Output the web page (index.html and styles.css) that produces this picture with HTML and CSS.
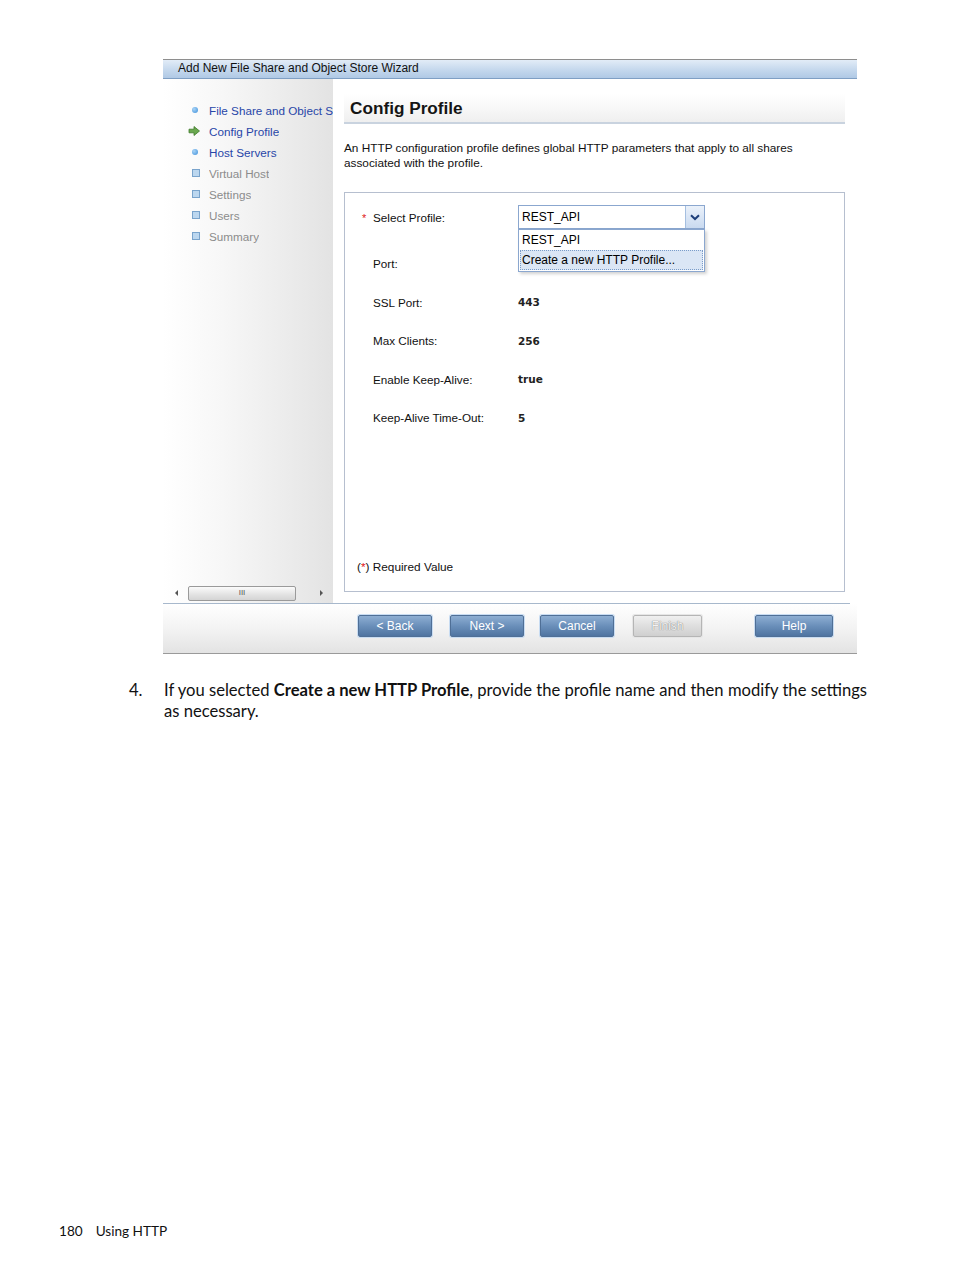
FILE: index.html
```html
<!DOCTYPE html>
<html>
<head>
<meta charset="utf-8">
<title>Config Profile</title>
<link rel="stylesheet" href="styles.css">
</head>
<body>
<div class="page">
  <div class="wizard">
    <div class="titlebar">Add New File Share and Object Store Wizard</div>
    <div class="main">
      <div class="nav">
        <ul class="steps">
          <li class="step-item active"><span class="bullet dot"></span><span class="step-text">File Share and Object Store Name</span></li>
          <li class="step-item active"><span class="bullet arrow"><svg width="12" height="10" viewBox="0 0 12 10"><path d="M1 3.2 H6 V0.5 L11.5 5 L6 9.5 V6.8 H1 Z" fill="#6aa84f" stroke="#3f7a2a" stroke-width="0.8"/></svg></span><span class="step-text">Config Profile</span></li>
          <li class="step-item active"><span class="bullet dot"></span><span class="step-text">Host Servers</span></li>
          <li class="step-item pending"><span class="bullet square"></span><span class="step-text">Virtual Host</span></li>
          <li class="step-item pending"><span class="bullet square"></span><span class="step-text">Settings</span></li>
          <li class="step-item pending"><span class="bullet square"></span><span class="step-text">Users</span></li>
          <li class="step-item pending"><span class="bullet square"></span><span class="step-text">Summary</span></li>
        </ul>
        <div class="hscroll">
          <span class="sarrow left"></span>
          <span class="thumb"><span class="grip">III</span></span>
          <span class="sarrow right"></span>
        </div>
      </div>
      <div class="content">
        <div class="heading">Config Profile</div>
        <p class="desc">An HTTP configuration profile defines global HTTP parameters that apply to all shares<br>associated with the profile.</p>
        <div class="formbox">
          <div class="rows">
            <div class="row first">
              <div class="label"><span class="star">*</span>Select Profile:</div>
              <div class="value">
                <div class="select">
                  <span class="select-text">REST_API</span>
                  <span class="select-btn"><svg width="10" height="7" viewBox="0 0 10 7"><path d="M1 1.2 L5 5 L9 1.2" fill="none" stroke="#1e3f7a" stroke-width="2"/></svg></span>
                  <div class="droplist">
                    <div class="opt">REST_API</div>
                    <div class="opt hl">Create a new HTTP Profile...</div>
                  </div>
                </div>
              </div>
            </div>
            <div class="row"><div class="label">Port:</div><div class="value strong"></div></div>
            <div class="row"><div class="label">SSL Port:</div><div class="value strong">443</div></div>
            <div class="row"><div class="label">Max Clients:</div><div class="value strong">256</div></div>
            <div class="row"><div class="label">Enable Keep-Alive:</div><div class="value strong">true</div></div>
            <div class="row"><div class="label">Keep-Alive Time-Out:</div><div class="value strong">5</div></div>
          </div>
          <div class="required">(<span class="star-inline">*</span>) Required Value</div>
        </div>
      </div>
    </div>
    <div class="separator"></div>
    <div class="buttonbar">
      <span class="btn b-back">&lt; Back</span>
      <span class="btn b-next">Next &gt;</span>
      <span class="btn b-cancel">Cancel</span>
      <span class="btn b-finish disabled">Finish</span>
      <span class="btn b-help">Help</span>
    </div>
  </div>

  <div class="instruction">
    <span class="num">4.</span>
    <p class="itext">If you selected <b>Create a new HTTP Profile</b>, provide the profile name and then modify the settings as necessary.</p>
  </div>

  <footer class="footer"><span class="pnum">180</span><span class="ptitle">Using HTTP</span></footer>
</div>
</body>
</html>
```

FILE: styles.css
```css
* { box-sizing: border-box; }
html, body { margin: 0; padding: 0; background: #fff; }
body { font-family: "Liberation Sans", Arial, sans-serif; color: #000; }

.page {
  height: 1271px;
  display: flex;
  flex-direction: column;
  padding-top: 59px;
}

.wizard {
  width: 694px;
  margin-left: 163px;
}

.titlebar {
  height: 20px;
  border-top: 1px solid #8e8e8e;
  border-bottom: 1px solid #7f9fc4;
  background: linear-gradient(#e2ecf7, #c2d6ec 60%, #b0c9e5);
  font-size: 12px;
  line-height: 17px;
  padding-left: 15px;
  color: #111;
}

.main {
  display: flex;
  height: 524px;
}

.nav {
  width: 170px;
  flex: none;
  background: linear-gradient(to right, #ffffff 0%, #f7f7f7 35%, #ebebeb 75%, #e3e3e3 100%);
  display: flex;
  flex-direction: column;
  overflow: hidden;
}

.steps {
  list-style: none;
  margin: 0;
  padding: 20.5px 0 0 25px;
  flex: 1;
}
.step-item {
  display: flex;
  align-items: center;
  height: 21px;
  font-size: 11.7px;
  white-space: nowrap;
  overflow: hidden;
}
.step-text { overflow: hidden; }
.step-item.active { color: #2846a8; }
.step-item.pending { color: #8c8c8c; }
.bullet {
  width: 21px;
  flex: none;
  display: flex;
  align-items: center;
}
.bullet.dot::before {
  content: "";
  width: 6px; height: 6px;
  margin-left: 4px;
  border-radius: 50%;
  background: radial-gradient(circle at 35% 35%, #a9d4f7, #3d8fda);
}
.bullet.square::before {
  content: "";
  width: 6px; height: 6px;
  margin-left: 4px;
  background: #bcd7ef;
  border: 1px solid #7aa4cc;
}
.bullet.arrow svg { display: block; }

.hscroll {
  height: 16px;
  margin: 0 3px 2px 5px;
  display: flex;
  align-items: center;
}
.sarrow { width: 0; height: 0; border-top: 3px solid transparent; border-bottom: 3px solid transparent; }
.sarrow.left { border-right: 3px solid #555; margin-left: 7px; }
.sarrow.right { border-left: 3px solid #555; margin-left: 24px; }
.thumb {
  margin-left: 10px;
  width: 108px;
  height: 15px;
  border: 1px solid #9a9a9a;
  border-radius: 2px;
  background: linear-gradient(#fbfbfb, #e4e4e4 55%, #d4d4d4);
  display: flex;
  align-items: center;
  justify-content: center;
}
.grip { font-size: 8px; color: #555; letter-spacing: 0; line-height: 1; }

.content {
  flex: 1;
  background: #fff;
  padding: 14px 12px 11px 11px;
  display: flex;
  flex-direction: column;
}
.heading {
  height: 31px;
  border-bottom: 2px solid #c9d3df;
  background: linear-gradient(#ffffff, #f8f8f8 50%, #efefef);
  font-size: 17.2px;
  font-weight: bold;
  line-height: 31px;
  padding-left: 6px;
  color: #151515;
}
.desc {
  margin: 17px 0 0 0;
  font-size: 11.8px;
  line-height: 15px;
  color: #111;
}
.formbox {
  margin-top: 21px;
  flex: 1;
  border: 1px solid #b6bfcf;
  display: flex;
  flex-direction: column;
  padding: 11.5px 0 17px 0;
}
.rows { display: flex; flex-direction: column; }
.row {
  display: grid;
  grid-template-columns: 173px 1fr;
  align-items: center;
  height: 38.5px;
  font-size: 11.7px;
}
.row.first { height: 25px; margin-bottom: 15px; }
.label { padding-left: 28px; color: #111; white-space: nowrap; }
.star { color: #e02020; display: inline-block; width: 11px; margin-left: -11px; font-size: 11px; }
.value.strong {
  font-family: "DejaVu Sans", Verdana, sans-serif;
  font-weight: bold;
  font-size: 10.5px;
  color: #222;
}

.select {
  position: relative;
  width: 187px;
  height: 24px;
  border: 1px solid #8ba7cf;
  display: flex;
  align-items: stretch;
  font-size: 12px;
}
.select-text { flex: 1; padding-left: 3px; line-height: 22px; }
.select-btn {
  width: 19px;
  border-left: 1px solid #a5bfe0;
  background: linear-gradient(#eaf1fa, #c9daf0);
  display: flex;
  align-items: center;
  justify-content: center;
}
.droplist {
  position: absolute;
  left: -1px;
  top: 23px;
  width: 187px;
  border: 1px solid #8ba7cf;
  background: #fff;
  box-shadow: 2px 2px 3px rgba(0,0,0,0.18);
  padding: 0 1px 1px 1px;
}
.opt { height: 20px; line-height: 20px; padding-left: 2px; font-size: 12px; }
.opt.hl {
  background: #dbe6f5;
  border: 1px dotted #7a9cc9;
  line-height: 18px;
  padding-left: 1px;
}

.required {
  margin-top: auto;
  padding-left: 12px;
  font-size: 11.8px;
  color: #111;
}
.star-inline { color: #e02020; }

.separator {
  width: 687px;
  height: 1px;
  background: #a7b8cc;
}
.buttonbar {
  height: 50px;
  border-bottom: 1px solid #9a9a9a;
  background: linear-gradient(#ffffff, #f3f3f3 50%, #e3e3e3);
  display: flex;
  align-items: flex-start;
  padding: 11px 0 0 195px;
}
.btn {
  height: 22px;
  border: 1px solid #4f6f96;
  border-radius: 2px;
  background: linear-gradient(#8eaed2, #6a8fba 50%, #4f74a1);
  box-shadow: 0 0 0 1px #c8dcf2;
  color: #fff;
  font-size: 12px;
  display: flex;
  align-items: center;
  justify-content: center;
}
.b-back { width: 74px; }
.b-next { width: 74px; margin-left: 18px; }
.b-cancel { width: 74px; margin-left: 16px; }
.b-finish { width: 69px; margin-left: 19px; }
.b-help { width: 78px; margin-left: 53px; }
.btn.disabled {
  background: linear-gradient(#f0f0f0, #dedede 50%, #cfcfcf);
  border-color: #b5b5b5;
  box-shadow: 0 0 0 1px #e6e6e6;
  color: #f2f2f2;
  text-shadow: 0 0 1px #8a8a8a, 0 0 1px #8a8a8a;
}

.instruction {
  margin: 26px 0 0 129px;
  display: flex;
  font-family: "Lato", "Liberation Sans", sans-serif;
  font-size: 16.6px;
  line-height: 21px;
  color: #111;
}
.num { width: 35px; flex: none; }
.itext { margin: 0; width: 712px; }
.itext b { font-weight: bold; }

.footer {
  margin-top: auto;
  padding: 0 0 31px 59px;
  font-family: "Lato", "Liberation Sans", sans-serif;
  font-size: 13.6px;
  line-height: 18px;
  color: #111;
}
.ptitle { margin-left: 13px; }
```
